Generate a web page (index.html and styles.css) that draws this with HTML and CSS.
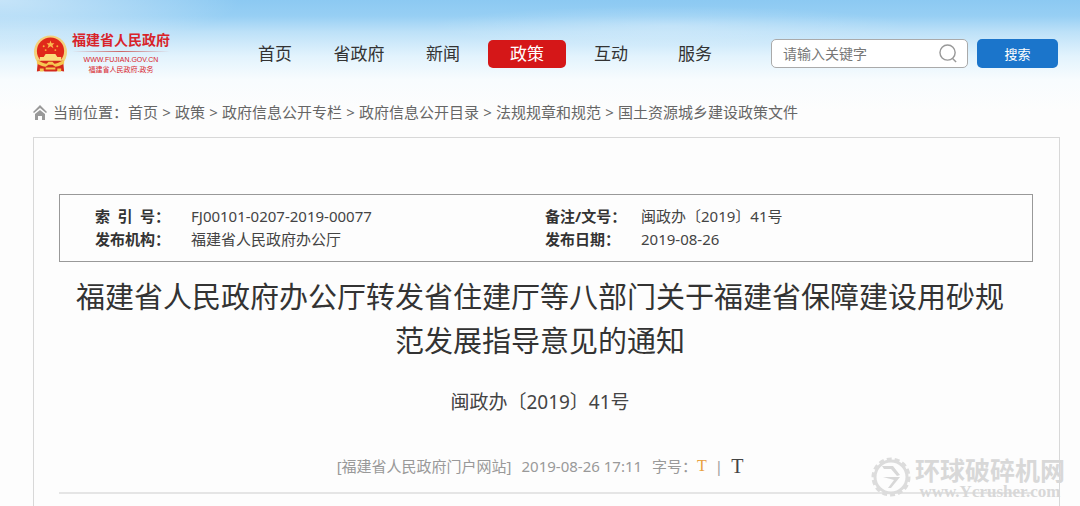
FILE: index.html
```html
<!DOCTYPE html>
<html lang="zh-CN">

<head>
    <meta charset="utf-8">
    <title>福建省人民政府</title>
    <link rel="stylesheet" href="styles.css">
</head>

<body>
    <header class="header">
        <a href="#" class="logo">
            <svg class="emblem" viewBox="0 0 36 38" aria-hidden="true">
                <circle cx="18" cy="17" r="17" fill="#f3d27c"/>
                <circle cx="18" cy="16" r="14" fill="#e0281a"/>
                <path d="M5 26h26l1 11-6-1-2 1H12l-2-1-6 1z" fill="#d42a1c"/>
                <path d="M18 5l1 3h3l-2 2 1 3-3-2-3 2 1-3-2-2h3z" fill="#fbb84e"/>
                <g fill="#f8b03f">
                    <circle cx="11" cy="11" r="1"/>
                    <circle cx="25" cy="11" r="1"/>
                    <circle cx="13" cy="15" r="1"/>
                    <circle cx="23" cy="15" r="1"/>
                </g>
                <path d="M13 19h10l2 3h4v4H7v-4h4z" fill="#fbdc7a"/>
                <path d="M4 25q7 4 10 4l2-2h4l2 2q3 0 10-4v4q-6 3-9 3l-3-2h-4l-3 2q-3 0-9-3z" fill="#f6c751"/>
                <path d="M7 34h4v3H7zM25 34h4v3h-4zM13 33h10v2H13z" fill="#f6c751"/>
            </svg>
            <span class="logo-text">
                <strong class="logo-name">福建省人民政府</strong>
                <span class="logo-line"></span>
                <span class="logo-url">WWW.FUJIAN.GOV.CN</span>
                <span class="logo-sub">福建省人民政府.政务</span>
            </span>
        </a>
        <nav class="nav">
            <a href="#">首页</a>
            <a href="#">省政府</a>
            <a href="#">新闻</a>
            <a href="#" class="active">政策</a>
            <a href="#">互动</a>
            <a href="#">服务</a>
        </nav>
        <form class="search">
            <div class="search-box">
                <input type="text" name="keyword" placeholder="请输入关键字" aria-label="请输入关键字">
                <svg class="search-icon" viewBox="0 0 20 20" aria-hidden="true">
                    <circle cx="9" cy="9" r="8"/>
                    <path d="M14 15l4 4"/>
                </svg>
            </div>
            <button type="submit">搜索</button>
        </form>
    </header>

    <div class="crumbs">
        <svg class="home-icon" viewBox="0 0 14 15" aria-hidden="true">
            <path d="M0 7l7-7 7 7-1 1-6-5-6 5z"/>
            <path d="M2 9l5-4 5 4v6H9v-4H5v4H2z"/>
        </svg>
        <span>当前位置：</span>
        <a href="#">首页</a><i>&gt;</i>
        <a href="#">政策</a><i>&gt;</i>
        <a href="#">政府信息公开专栏</a><i>&gt;</i>
        <a href="#">政府信息公开目录</a><i>&gt;</i>
        <a href="#">法规规章和规范</a><i>&gt;</i>
        <a href="#">国土资源城乡建设政策文件</a>
    </div>

    <main class="content">
        <table class="info">
            <tr>
                <th>索&ensp;引&ensp;号：</th>
                <td class="wide">FJ00101-0207-2019-00077</td>
                <th>备注/文号：</th>
                <td>闽政办〔2019〕41号</td>
            </tr>
            <tr>
                <th>发布机构：</th>
                <td class="wide">福建省人民政府办公厅</td>
                <th>发布日期：</th>
                <td>2019-08-26</td>
            </tr>
        </table>
        <h1>福建省人民政府办公厅转发省住建厅等八部门关于福建省保障建设用砂规范发展指导意见的通知</h1>
        <p class="doc-no">闽政办〔2019〕41号</p>
        <div class="meta">
            <span>[福建省人民政府门户网站]</span>
            <span>2019-08-26 17:11</span>
            <span class="font-size">字号：<button type="button" class="small">T</button><b>|</b><button type="button" class="big">T</button></span>
        </div>
    </main>

    <div class="watermark">
        <svg viewBox="0 0 40 40" aria-hidden="true">
            <circle cx="20" cy="20" r="16" fill="none" stroke="#dcdcdc" stroke-width="3"/>
            <circle cx="20" cy="20" r="18" fill="none" stroke="#dcdcdc" stroke-width="3" stroke-dasharray="5 3"/>
            <path d="M11 9h11l7 9-3 1-6-7h-7zM29 20l-9 11h-3l6-8-11-3z" fill="#d8d8d8"/>
        </svg>
        <div>
            <span class="wm-name">环球破碎机网</span>
            <span class="wm-url">www.Ycrusher.com</span>
        </div>
    </div>
</body>

</html>
```
FILE: styles.css
```css
* {
    box-sizing: border-box;
}

body {
    display: flex;
    flex-direction: column;
    margin: 0;
    position: relative;
    min-height: 100vh;
    font-family: "Noto Sans", "Noto Sans CJK SC", sans-serif;
    font-size: 15px;
    color: #444;
    background:
        radial-gradient(ellipse 240px 50px at 0 0, rgba(255, 255, 255, 0.5), transparent),
        radial-gradient(ellipse 240px 20px at 62% 26px, rgba(255, 255, 255, 0.25), transparent),
        linear-gradient(#8cc9f2 0, #97cff4 16px, #bde1f8 32px, #e2f3fd 56px, #f8fcfe 80px, #fdfdfd 110px);
}

a {
    color: inherit;
    text-decoration: none;
}

.header {
    display: flex;
    align-items: center;
    padding: 32px 22px 0 33px;
}

.logo {
    display: flex;
    align-items: center;
    width: 203px;
    color: #d8232a;
}

.emblem {
    width: 35px;
    height: 38px;
}

.logo-text {
    display: flex;
    flex-direction: column;
    align-items: center;
    margin-left: 4px;
}

.logo-name {
    font-size: 14px;
    line-height: 16px;
}

.logo-line {
    width: 98px;
    height: 1px;
    margin: 3px 0;
    background: linear-gradient(to right, transparent, #c66, transparent);
}

.logo-url {
    font-family: "Liberation Sans", Arial, sans-serif;
    font-size: 7px;
    line-height: 10px;
}

.logo-sub {
    font-size: 7px;
    line-height: 10px;
}

.nav {
    display: flex;
    gap: 6px;
}

.nav a {
    width: 78px;
    line-height: 28px;
    border-radius: 5px;
    text-align: center;
    font-size: 17px;
    color: #333;
}

.nav a.active {
    background: #d51718;
    color: #fff;
}

.search {
    display: flex;
    gap: 9px;
    margin-left: auto;
}

.search-box {
    display: flex;
    align-items: center;
    width: 197px;
    height: 29px;
    padding: 0 9px 0 11px;
    border: 1px solid #aaa;
    border-radius: 5px;
    background: #fff;
}

.search-box input {
    flex: 1;
    min-width: 0;
    padding: 0;
    border: 0;
    outline: 0;
    background: none;
    font: inherit;
    font-size: 14px;
}

.search-box input::placeholder {
    color: #777;
}

.search-icon {
    width: 19px;
    height: 19px;
    fill: none;
    stroke: #999;
    stroke-width: 1.5;
}

.search button {
    width: 81px;
    height: 29px;
    border: 0;
    border-radius: 5px;
    background: #1b75cb;
    color: #fff;
    font: inherit;
    font-size: 13px;
}

.crumbs {
    display: flex;
    align-items: center;
    margin: 25px 33px 0;
    line-height: 24px;
    color: #666;
}

.crumbs i {
    width: 17px;
    text-align: center;
    font-style: normal;
}

.home-icon {
    width: 14px;
    height: 15px;
    margin-right: 6px;
    fill: #999;
}

.content {
    flex: 1;
    margin: 13px 20px 0 33px;
    padding: 56px 26px 0 25px;
    border: 1px solid #d8d8d8;
    border-bottom: 0;
}

.info {
    width: 100%;
    padding: 10px 35px;
    border: 1px solid #999;
    border-spacing: 0;
    line-height: 23px;
}

.info th,
.info td {
    padding: 0;
    text-align: left;
}

.info th {
    width: 96px;
    color: #333;
}

.info td.wide {
    width: 354px;
}

h1 {
    margin: 13px 0 0;
    padding: 0 20px 0 8px;
    font-size: 29px;
    line-height: 44px;
    font-weight: normal;
    text-align: center;
    color: #333;
}

.doc-no {
    margin: 25px 0 0;
    padding-right: 12px;
    font-size: 19px;
    line-height: 28px;
    text-align: center;
}

.meta {
    display: flex;
    justify-content: center;
    gap: 10px;
    margin-top: 35px;
    padding: 0 12px 11px 0;
    border-bottom: 2px solid #e5e5e5;
    line-height: 30px;
    color: #999;
}

.font-size {
    display: flex;
}

.font-size b {
    margin: 0 8px;
    font-weight: normal;
}

.font-size button {
    padding: 0;
    border: 0;
    background: none;
    font-family: "Liberation Serif", serif;
}

.font-size .small {
    font-size: 16px;
    color: #e8a040;
}

.font-size .big {
    font-size: 20px;
    color: #444;
}

.watermark {
    position: absolute;
    right: 15px;
    bottom: 5px;
    display: flex;
    gap: 4px;
    color: #d8d8d8;
}

.watermark svg {
    width: 40px;
    height: 40px;
}

.watermark span {
    display: block;
}

.wm-name {
    font-size: 25px;
    line-height: 26px;
    font-weight: bold;
}

.wm-url {
    font-family: "Liberation Serif", serif;
    font-size: 17px;
    line-height: 18px;
    font-weight: bold;
    text-align: center;
}
```
